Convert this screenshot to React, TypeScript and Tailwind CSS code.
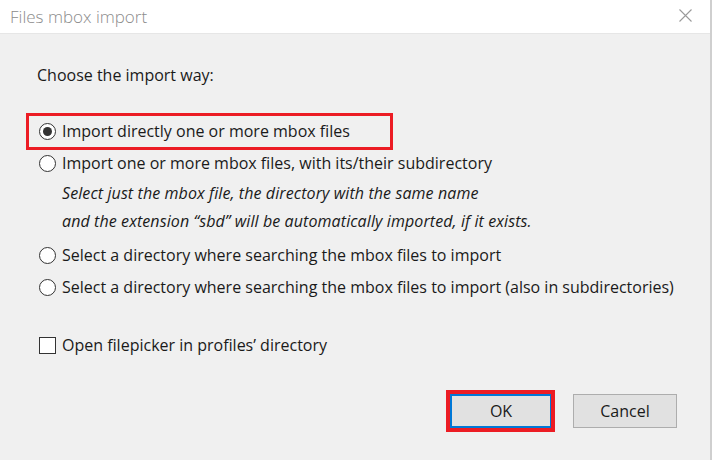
import React from "react";

const font = { fontFamily: '"Open Sans", "Noto Sans", sans-serif' };

function Radio({ checked }: { checked?: boolean }) {
  return (
    <span className="flex h-[17px] w-[17px] shrink-0 items-center justify-center rounded-full border border-[#333333] bg-white">
      {checked && <span className="h-[9px] w-[9px] rounded-full bg-[#333333]" />}
    </span>
  );
}

export default function App() {
  return (
    <div
      className="flex h-[460px] w-[712px] flex-col overflow-hidden border-r-2 border-[#cfcfcf] bg-[#f0f0f0] text-[16px] text-[#1a1a1a]"
      style={font}
    >
      <div className="flex h-[34px] shrink-0 items-center justify-between border-b border-[#e6e6e6] bg-white pl-[10px] pr-[18px]">
        <span className="text-[17px] font-light text-[#8c8c8c]">Files mbox import</span>
        <svg width="13" height="13" viewBox="0 0 13 13" className="mb-[2px]">
          <path d="M0.5 0.5 L12.5 12.5 M12.5 0.5 L0.5 12.5" stroke="#9a9a9a" strokeWidth="1.1" fill="none" />
        </svg>
      </div>

      <div className="flex flex-col pt-[25px]">
        <div className="flex h-[32px] items-center pl-[37px]">Choose the import way:</div>

        <div className="relative mt-[24px] flex h-[32px] items-center gap-[6px] pl-[39px]">
          <Radio checked />
          <span>Import directly one or more mbox files</span>
          <div className="pointer-events-none absolute left-[26px] top-[-2px] h-[37px] w-[367px] border-[3px] border-[#ec1c24]" />
        </div>

        <div className="flex h-[32px] items-center gap-[6px] pl-[39px]">
          <Radio />
          <span>Import one or more mbox files, with its/their subdirectory</span>
        </div>
        <div className="flex h-[28px] items-center pl-[62px] italic tracking-[0.1px]">
          Select just the mbox file, the directory with the same name
        </div>
        <div className="flex h-[28px] items-center pl-[62px] italic tracking-[0.1px]">
          and the extension “sbd” will be automatically imported, if it exists.
        </div>

        <div className="mt-[4px] flex h-[32px] items-center gap-[6px] pl-[39px]">
          <Radio />
          <span>Select a directory where searching the mbox files to import</span>
        </div>
        <div className="flex h-[32px] items-center gap-[6px] pl-[39px]">
          <Radio />
          <span>Select a directory where searching the mbox files to import (also in subdirectories)</span>
        </div>

        <div className="mt-[26px] flex h-[32px] items-center gap-[6px] pl-[39px]">
          <span className="h-[17px] w-[17px] shrink-0 border border-[#333333] bg-white" />
          <span>Open filepicker in profiles’ directory</span>
        </div>

        <div className="mt-[33px] flex justify-end gap-[21px] pr-[33px]">
          <div className="relative">
            <button className="flex h-[34px] w-[102px] items-center justify-center border-2 border-[#0078d7] bg-[#e1e1e1] text-[16px] text-[#1a1a1a]">
              OK
            </button>
            <div className="pointer-events-none absolute left-[-4px] top-[-4px] h-[42px] w-[109px] border-[4px] border-[#ec1c24]" />
          </div>
          <button className="flex h-[34px] w-[104px] items-center justify-center border border-[#adadad] bg-[#e1e1e1] text-[16px] text-[#1a1a1a]">
            Cancel
          </button>
        </div>
      </div>
    </div>
  );
}
